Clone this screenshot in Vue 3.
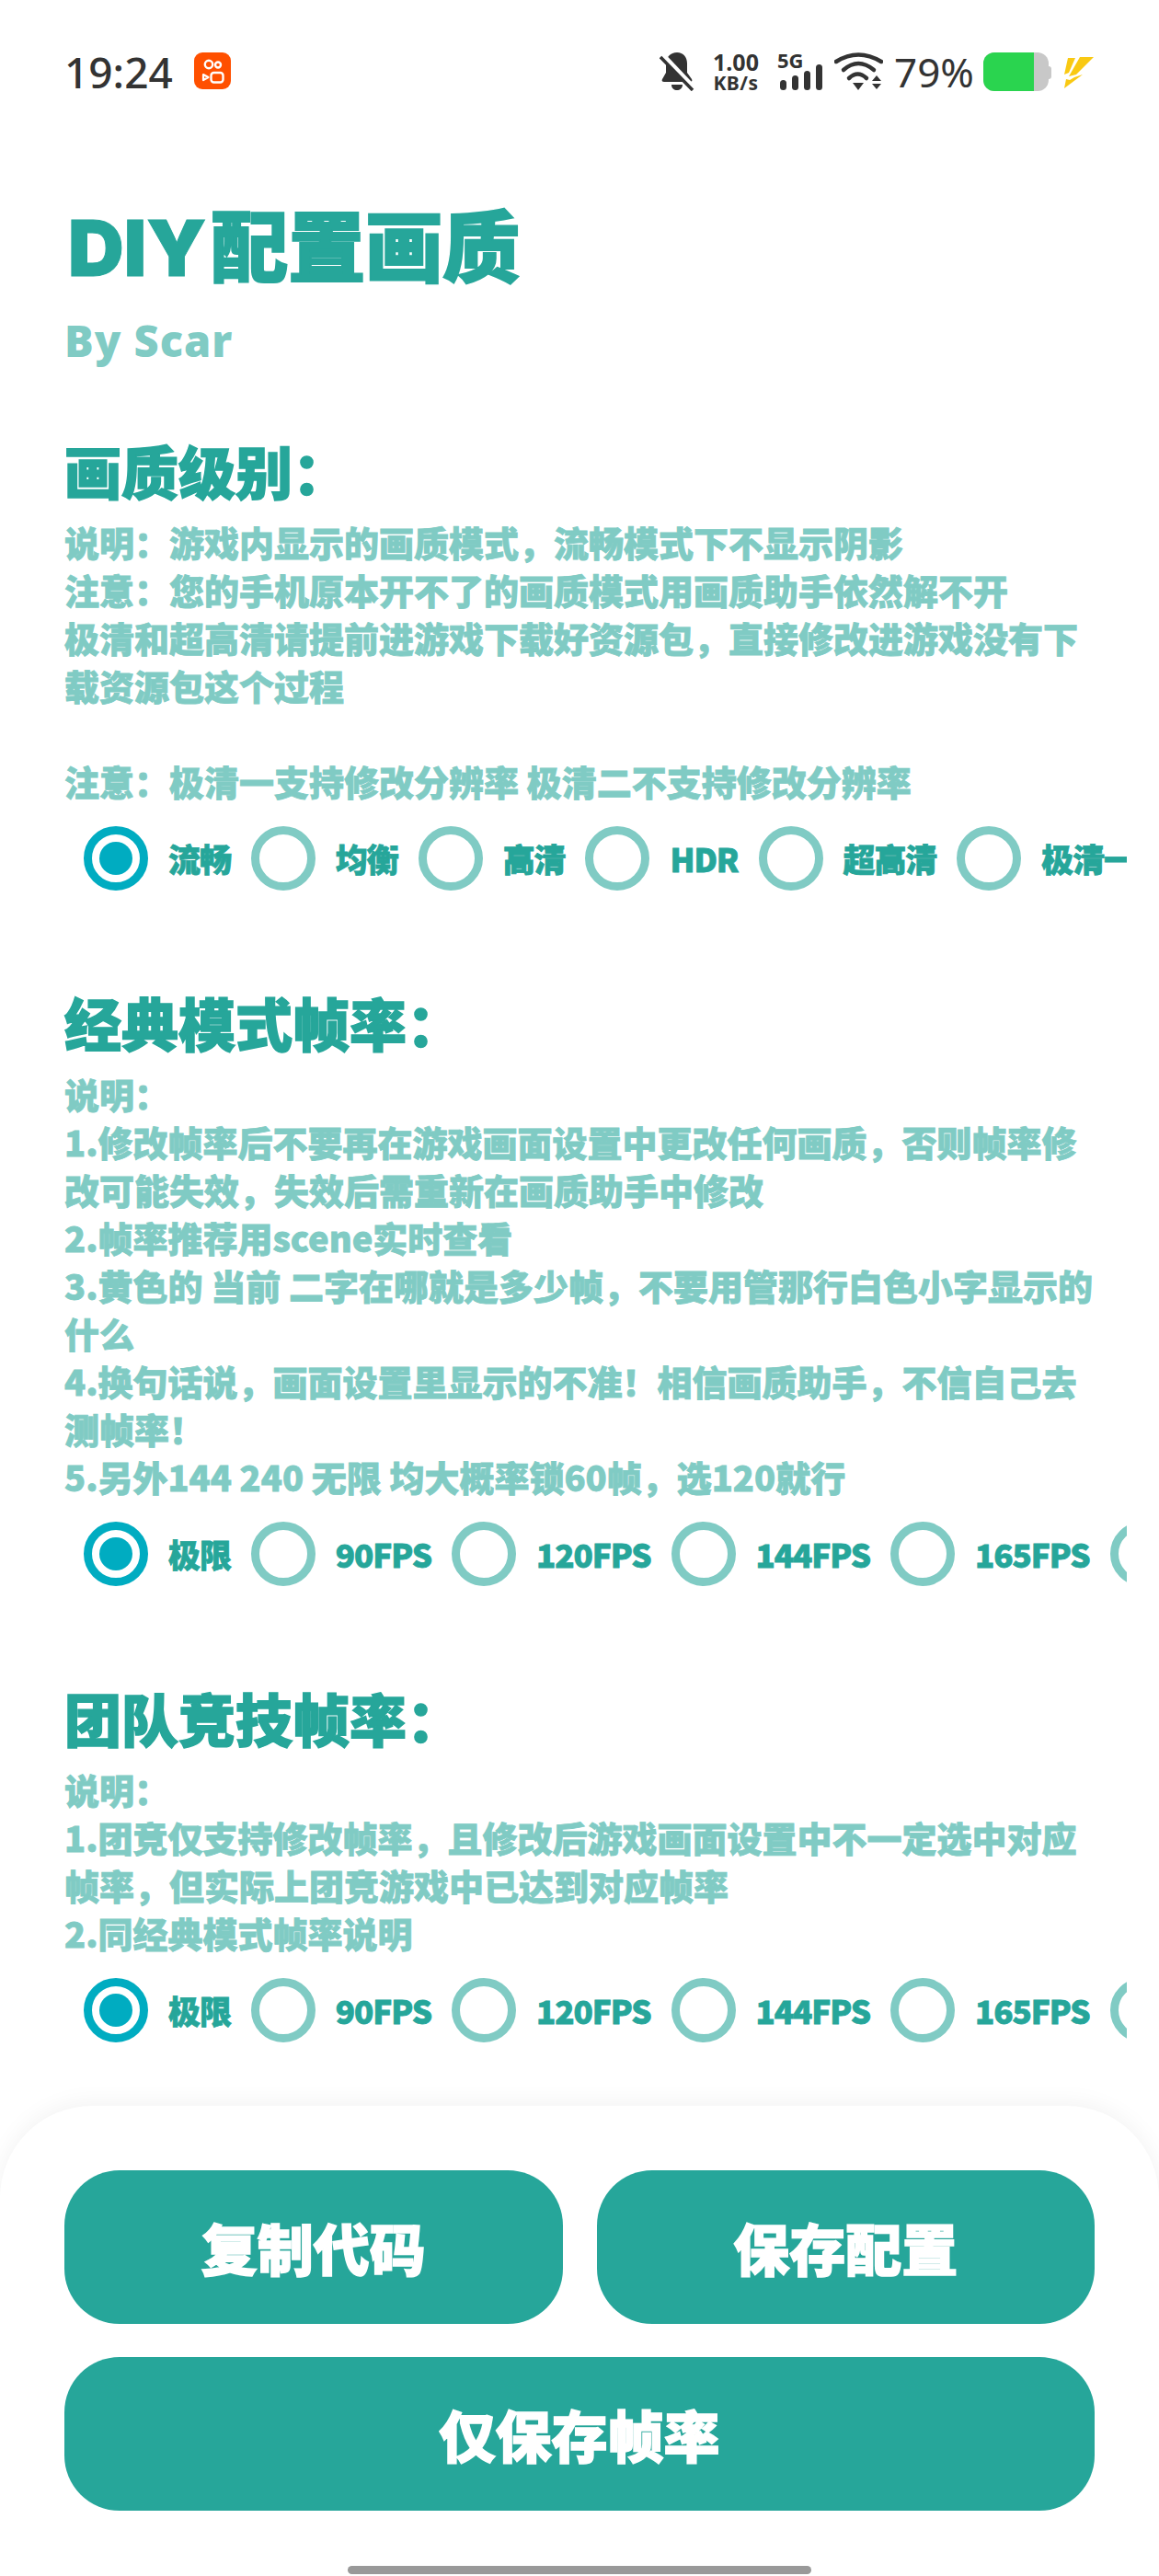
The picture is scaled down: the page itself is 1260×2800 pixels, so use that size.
<template>
  <div class="screen">
    <div class="status">
      <span class="clock">19:24</span>
      <svg class="app-icon" viewBox="0 0 40 40">
        <rect width="40" height="40" rx="9" fill="#ff5000" />
        <circle cx="16" cy="13" r="4.200" fill="none" stroke="#fff" stroke-width="2.400" />
        <circle cx="26" cy="13.500" r="3" fill="none" stroke="#fff" stroke-width="2.400" />
        <rect x="18.500" y="22" width="13" height="10.500" rx="3" fill="none" stroke="#fff" stroke-width="2.400" />
        <path d="M10 24l5.500 3-5.500 3z" fill="none" stroke="#fff" stroke-width="2.200" stroke-linejoin="round" />
      </svg>
      <div class="status-right">
        <svg class="bell" viewBox="0 0 38 42">
          <path d="M19 0c7 0 11 5 11 12v10l5 7c1 2 0 3-2 3H5c-2 0-3-1-2-3l4-7V12C7 5 12 0 19 0zM13 35h12c0 4-3 6-6 6s-6-2-6-6z" fill="#333" />
          <path d="M3 2l35 37" stroke="#fff" stroke-width="5" />
          <path d="M1 5l35 36" stroke="#333" stroke-width="3.500" />
        </svg>
        <div class="speed"><span class="speed-num">1.00</span><span class="speed-unit">KB/s</span></div>
        <div class="signal">
          <span class="net">5G</span>
          <div class="bars">
            <i style="height: 11px"></i>
            <i style="height: 16px"></i>
            <i style="height: 21px"></i>
            <i style="height: 28px"></i>
          </div>
        </div>
        <svg class="wifi" viewBox="0 0 53 42">
          <path d="M2 10Q26 -5 51 10" fill="none" stroke="#333" stroke-width="4.500" stroke-linecap="round" />
          <path d="M10 19Q26 5 43 19" fill="none" stroke="#333" stroke-width="4.500" stroke-linecap="round" />
          <path d="M16 28Q25.500 19 35 28" fill="none" stroke="#333" stroke-width="4.500" stroke-linecap="round" />
          <path d="M20 33h12l-6 8z" fill="#333" />
          <path d="M41 31l5-6 5 6zM41 34h10l-5 6z" fill="#333" />
        </svg>
        <span class="percent">79%</span>
        <div class="battery"><div class="battery-fill"></div></div>
        <svg class="bolt" viewBox="0 0 35 35">
          <path d="M6 2h8L7 18l-5 2zM19 1h15L15 20l-8 2zM22 20L2 35l2-10 4 1 5-3z" fill="#f9c913" />
        </svg>
      </div>
    </div>

    <div class="content">
      <h1 class="title"><span class="title-latin">DIY</span>配置画质</h1>
      <div class="author">By Scar</div>

      <section v-for="section in sections" :key="section.title" class="section">
        <h2 class="heading">{{ section.title }}</h2>
        <p class="desc">{{ section.desc }}</p>
        <div class="options">
          <div v-for="(opt, i) in section.options" :key="opt" class="option">
            <span class="radio" :class="{ on: i === 0 }"></span>
            <span class="label">{{ opt }}</span>
          </div>
        </div>
      </section>
    </div>

    <div class="sheet">
      <div class="btn-row">
        <button class="btn">复制代码</button>
        <button class="btn">保存配置</button>
      </div>
      <button class="btn">仅保存帧率</button>
      <div class="home-bar"></div>
    </div>
  </div>
</template>

<script setup>
const fps = ['极限', '90FPS', '120FPS', '144FPS', '165FPS', '240FPS']

const sections = [
  {
    title: '画质级别：',
    desc: '说明：游戏内显示的画质模式，流畅模式下不显示阴影\n注意：您的手机原本开不了的画质模式用画质助手依然解不开\n极清和超高清请提前进游戏下载好资源包，直接修改进游戏没有下载资源包这个过程\n\n注意：极清一支持修改分辨率 极清二不支持修改分辨率',
    options: ['流畅', '均衡', '高清', 'HDR', '超高清', '极清一', '极清二']
  },
  {
    title: '经典模式帧率：',
    desc: '说明：\n1.修改帧率后不要再在游戏画面设置中更改任何画质，否则帧率修改可能失效，失效后需重新在画质助手中修改\n2.帧率推荐用scene实时查看\n3.黄色的 当前 二字在哪就是多少帧，不要用管那行白色小字显示的什么\n4.换句话说，画面设置里显示的不准！相信画质助手，不信自己去测帧率！\n5.另外144 240 无限 均大概率锁60帧，选120就行',
    options: fps
  },
  {
    title: '团队竞技帧率：',
    desc: '说明：\n1.团竞仅支持修改帧率，且修改后游戏画面设置中不一定选中对应帧率，但实际上团竞游戏中已达到对应帧率\n2.同经典模式帧率说明',
    options: fps
  }
]
</script>

<style>
body {
  background: #fff;
}
</style>

<style scoped>
.screen {
  width: 1260px;
  height: 2800px;
  display: flex;
  flex-direction: column;
  overflow: hidden;
  background: #fff;
  font-family: "Noto Sans CJK SC", "Noto Sans", sans-serif;
}

.status {
  height: 156px;
  flex: none;
  display: flex;
  align-items: flex-start;
  padding: 57px 70px 0 70px;
  box-sizing: border-box;
}

.clock {
  font-family: "Noto Sans", sans-serif;
  font-size: 46px;
  font-weight: 500;
  line-height: 42px;
  color: #333;
}

.app-icon {
  width: 40px;
  height: 40px;
  margin-left: 23px;
}

.status-right {
  margin-left: auto;
  height: 42px;
  display: flex;
  align-items: center;
}

.bell {
  width: 38px;
  height: 42px;
}

.speed {
  margin-left: 20px;
  width: 50px;
  display: flex;
  flex-direction: column;
  font-family: "Noto Sans", sans-serif;
  font-weight: 700;
  color: #333;
  text-align: center;
}

.speed-num {
  font-size: 25px;
  line-height: 24px;
}

.speed-unit {
  font-size: 21px;
  line-height: 22px;
  letter-spacing: 0.500px;
  white-space: nowrap;
}

.signal {
  margin-left: 19px;
  width: 50px;
  height: 42px;
  position: relative;
}

.net {
  position: absolute;
  left: 1px;
  top: -4px;
  font-family: "Noto Sans", sans-serif;
  font-size: 22px;
  font-weight: 700;
  line-height: 24px;
  color: #333;
}

.bars {
  position: absolute;
  right: 0;
  bottom: 1px;
  display: flex;
  align-items: flex-end;
  gap: 6px;
}

.bars i {
  display: block;
  width: 7px;
  border-radius: 3.500px;
  background: #333;
}

.wifi {
  margin-left: 13px;
  width: 53px;
  height: 42px;
}

.percent {
  margin-left: 12px;
  width: 85px;
  font-family: "Noto Sans", sans-serif;
  font-size: 44px;
  line-height: 42px;
  color: #333;
  white-space: nowrap;
}

.battery {
  margin-left: 12px;
  width: 71px;
  margin-right: 4px;
  height: 42px;
  border-radius: 12px;
  background: #c8c8c8;
  position: relative;
}

.battery::after {
  content: "";
  position: absolute;
  right: -3px;
  top: 15px;
  width: 3px;
  height: 14px;
  border-radius: 0 3px 3px 0;
  background: #c8c8c8;
}

.battery-fill {
  width: 55px;
  height: 100%;
  border-radius: 12px 0 0 12px;
  background: #2ad44f;
}

.bolt {
  margin-left: 11px;
  width: 35px;
  height: 35px;
}

.content {
  flex: 1;
  min-height: 0;
  padding: 0 70px;
}

.title {
  margin: 53px 0 0;
  font-size: 84px;
  font-weight: 900;
  line-height: 110px;
  color: #26a69a;
  -webkit-text-stroke: 2px currentColor;
}

.title-latin {
  font-family: Inter, "Noto Sans", sans-serif;
  margin-left: 4px;
  margin-right: 5px;
  -webkit-text-stroke: 1px currentColor;
}

.author {
  font-family: "Noto Sans", sans-serif;
  font-size: 47px;
  font-weight: 900;
  line-height: 60px;
  letter-spacing: 1px;
  margin-top: 15px;
  color: #80cbc4;
}

.section {
  margin-top: 71px;
}

.section + .section {
  margin-top: 103px;
}

.heading {
  margin: 0;
  font-size: 62px;
  font-weight: 900;
  line-height: 80px;
  color: #26a69a;
  -webkit-text-stroke: 1.500px currentColor;
}

.desc {
  margin: 12px 0 0;
  font-size: 38px;
  font-weight: 900;
  line-height: 52px;
  color: #80cbc4;
  white-space: pre-line;
  -webkit-text-stroke: 0.800px currentColor;
}

.options {
  display: flex;
  width: 1155px;
  overflow: hidden;
  margin-top: 23px;
}

.option {
  flex: none;
  display: flex;
  align-items: center;
  height: 70px;
  margin-left: 22px;
}

.option:first-child {
  margin-left: 21px;
}

.radio {
  width: 70px;
  height: 70px;
  flex: none;
  box-sizing: border-box;
  border: 9px solid #80cbc4;
  border-radius: 50%;
  position: relative;
}

.radio.on {
  border-color: #00acc1;
}

.radio.on::after {
  content: "";
  position: absolute;
  left: 8px;
  top: 8px;
  width: 36px;
  height: 36px;
  border-radius: 50%;
  background: #00acc1;
}

.label {
  margin-left: 22px;
  font-size: 35px;
  font-weight: 900;
  line-height: 44px;
  letter-spacing: -1.100px;
  color: #26a69a;
  white-space: nowrap;
  -webkit-text-stroke: 0.800px currentColor;
}

.sheet {
  flex: none;
  height: 511px;
  box-sizing: border-box;
  padding: 70px 70px 0;
  display: flex;
  flex-direction: column;
  gap: 36px;
  border-radius: 100px 100px 0 0;
  background: #fff;
  box-shadow: 0 -4px 24px rgba(0, 0, 0, 0.05);
  position: relative;
}

.btn-row {
  display: flex;
  gap: 37px;
}

.btn-row .btn {
  flex: 1;
}

.btn {
  height: 167px;
  border: 0;
  border-radius: 60px;
  background: #26a69a;
  color: #fff;
  font-family: inherit;
  font-size: 61px;
  font-weight: 900;
  -webkit-text-stroke: 1.500px currentColor;
}

.home-bar {
  position: absolute;
  left: 378px;
  bottom: 2px;
  width: 504px;
  height: 9px;
  border-radius: 5px;
  background: #999;
}
</style>
